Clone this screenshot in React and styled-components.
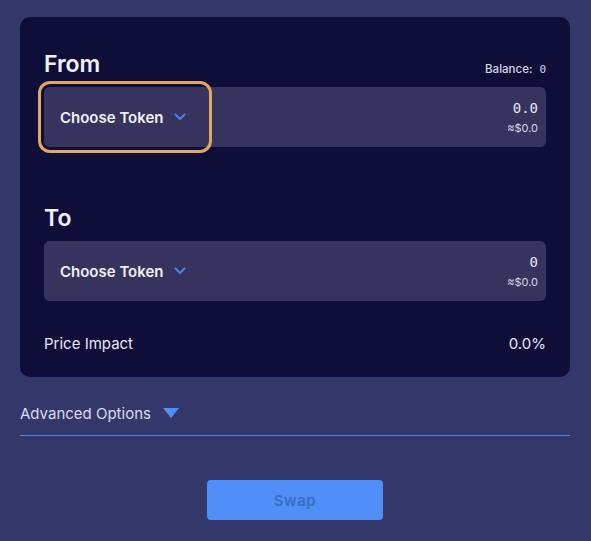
import React from "react";
import styled, { createGlobalStyle } from "styled-components";

const Global = createGlobalStyle`
  html, body { margin: 0; padding: 0; background: #33376a; }
  body { font-family: Inter, "Noto Sans", sans-serif; color: #e8e8f4; }
`;

const Page = styled.div`
  padding: 17px 21px 21px 20px;
  display: flex;
  flex-direction: column;
`;

const Card = styled.div`
  background: #0f0e38;
  border-radius: 10px;
  padding: 30px 24px 24px;
  display: flex;
  flex-direction: column;
`;

const Section = styled.div`
  display: flex;
  flex-direction: column;
  margin-bottom: ${(p) => p.$mb || 0}px;
`;

const LabelRow = styled.div`
  display: flex;
  justify-content: space-between;
  align-items: flex-end;
  height: 30px;
  margin-bottom: 10px;
`;

const Label = styled.div`
  font-size: 23px;
  font-weight: 600;
  color: #f0f0fa;
  line-height: 26px;
`;

const Balance = styled.div`
  font-size: 11.5px;
  font-weight: 500;
  color: #d8d8e8;
  line-height: 14px;
  margin-bottom: 0;
  span {
    font-family: "DejaVu Sans Mono", monospace;
    font-size: 11px;
    margin-left: 7px;
  }
`;

const InputBox = styled.div`
  background: #36345e;
  border-radius: 6px;
  height: 60px;
  display: flex;
  justify-content: space-between;
  align-items: stretch;
`;

const TokenButton = styled.button`
  background: #36345e;
  border: none;
  border-radius: 6px;
  width: 162px;
  padding: 0 0 0 16px;
  display: flex;
  align-items: center;
  gap: 10px;
  font-family: Inter, sans-serif;
  font-size: 15px;
  font-weight: 600;
  color: #eef0f8;
  cursor: pointer;
  outline: ${(p) => (p.$focused ? "3px solid #e2a95c" : "none")};
  outline-offset: 3px;
`;

const Amounts = styled.div`
  display: flex;
  flex-direction: column;
  align-items: flex-end;
  justify-content: center;
  padding-right: 8px;
  gap: 4px;
`;

const Amount = styled.div`
  font-family: "DejaVu Sans Mono", monospace;
  font-size: 14px;
  color: #e8e8f4;
  line-height: 18px;
`;

const Usd = styled.div`
  font-size: 11px;
  color: #d8d8e8;
  line-height: 14px;
`;

const ImpactRow = styled.div`
  display: flex;
  justify-content: space-between;
  align-items: center;
  font-size: 15px;
  font-weight: 400;
  color: #e8e8f4;
  margin-top: 33px;
`;

const Advanced = styled.div`
  display: flex;
  align-items: center;
  gap: 12px;
  margin-top: 27px;
  padding-bottom: 12px;
  border-bottom: 1px solid #4a86e8;
  font-size: 15px;
  color: #dcdcec;
`;

const SwapWrap = styled.div`
  display: flex;
  justify-content: center;
  margin-top: 44px;
`;

const SwapButton = styled.button`
  width: 176px;
  height: 40px;
  border: none;
  border-radius: 4px;
  background: #4f8ff7;
  color: #3a6cc2;
  font-family: Inter, sans-serif;
  font-size: 15px;
  font-weight: 600;
  letter-spacing: 0.5px;
`;

const Chevron = () => (
  <svg width="12" height="8" viewBox="0 0 12 8">
    <path d="M1.5 1.5 L6 6 L10.5 1.5" fill="none" stroke="#4a86e8" strokeWidth="1.8" strokeLinecap="round" strokeLinejoin="round" />
  </svg>
);

const Triangle = () => (
  <svg width="16" height="11" viewBox="0 0 16 11">
    <path d="M0 0 H16 L8 10 Z" fill="#4f8ff7" />
  </svg>
);

const TokenField = ({ label, amount, balance, focused, mb }) => (
  <Section $mb={mb}>
    <LabelRow>
      <Label>{label}</Label>
      {balance !== undefined && (
        <Balance>
          Balance:<span>{balance}</span>
        </Balance>
      )}
    </LabelRow>
    <InputBox>
      <TokenButton $focused={focused}>
        Choose Token <Chevron />
      </TokenButton>
      <Amounts>
        <Amount>{amount}</Amount>
        <Usd>≈$0.0</Usd>
      </Amounts>
    </InputBox>
  </Section>
);

export default function App() {
  return (
    <>
      <Global />
      <Page>
        <Card>
          <TokenField label="From" amount="0.0" balance="0" focused mb={54} />
          <TokenField label="To" amount="0" />
          <ImpactRow>
            <span>Price Impact</span>
            <span>0.0%</span>
          </ImpactRow>
        </Card>
        <Advanced>
          Advanced Options <Triangle />
        </Advanced>
        <SwapWrap>
          <SwapButton disabled>Swap</SwapButton>
        </SwapWrap>
      </Page>
    </>
  );
}
